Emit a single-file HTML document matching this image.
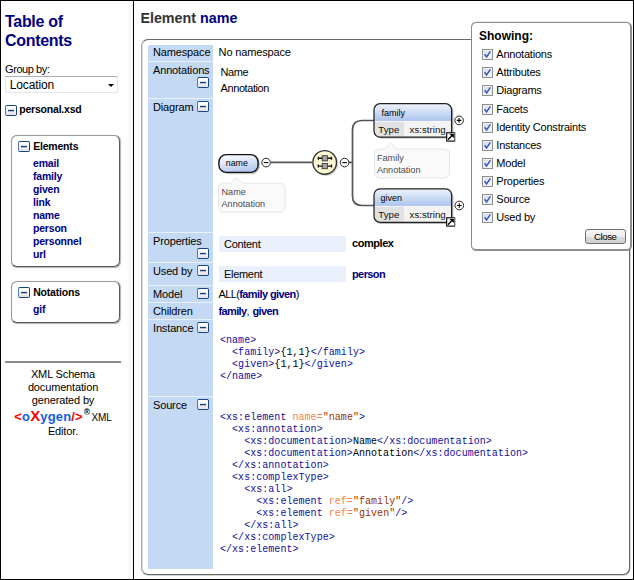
<!DOCTYPE html>
<html>
<head>
<meta charset="utf-8">
<title>Schema documentation for personal.xsd</title>
<style>
html,body{margin:0;padding:0;}
body{width:634px;height:580px;position:relative;overflow:hidden;background:#fff;font-family:"Liberation Sans",sans-serif;font-size:12px;color:#000;}
.abs{position:absolute;}
#frame{left:0;top:0;width:632px;height:578px;border:1px solid #000;z-index:50;pointer-events:none;}
#sep{left:133px;top:0;width:1px;height:580px;background:#000;}
#sepshade{left:127px;top:2px;width:6px;height:577px;background:linear-gradient(to right,#fff 0%,#f8f8f8 30%,#f7f7f7 100%);}
a,.lnk{color:#000080;font-weight:bold;text-decoration:none;}
/* left */
#toc{left:5px;top:12px;font-size:16px;line-height:19px;font-weight:bold;color:#000080;letter-spacing:-0.3px;}
#groupby{left:5px;top:62px;font-size:11px;line-height:14px;color:#000;letter-spacing:-0.42px;}
#sel{left:5px;top:76px;width:111px;height:15px;border:1px solid #e2e5ee;border-top-color:#abadb3;background:#fff;font-size:12px;line-height:17px;}
#sel span{position:absolute;left:3.7px;top:0;letter-spacing:-0.12px;}
#sel i{position:absolute;right:3.5px;top:7px;width:0;height:0;border-left:3px solid transparent;border-right:3px solid transparent;border-top:3px solid #000;}
.ico{display:inline-block;width:9.6px;height:9px;border:1px solid #17457f;border-left-color:#4d78b0;border-bottom-width:1.3px;border-radius:2px;background:linear-gradient(#fff 15%,#e4e0ea);position:relative;vertical-align:top;}
.ico:after{content:"";position:absolute;left:2px;top:4px;width:6px;height:1px;background:#123c80;box-shadow:0 1px 0 rgba(18,60,128,0.28),0 -1px 0 rgba(18,60,128,0.12);}
#pers{left:5px;top:102px;font-weight:bold;font-size:10.5px;line-height:14px;color:#000;letter-spacing:-0.2px;}
#pers .ico{margin-right:2.6px;margin-top:3px;}
.lbox{border:1px solid #9a9a9a;border-right-color:#5a5a5a;border-bottom-color:#5a5a5a;border-radius:6px;background:#fff;box-shadow:0.6px 0.6px 0.8px rgba(0,0,0,0.3);}
#elbox{left:11px;top:135px;width:107px;height:130px;}
#nobox{left:11px;top:281px;width:107px;height:39.5px;}
.lbox .h{position:absolute;left:6px;top:3px;font-weight:bold;font-size:10.5px;line-height:14px;color:#000;letter-spacing:-0.2px;}
.lbox .h .ico{margin-right:3.6px;margin-top:2px;}
.lbox .l{position:absolute;left:21px;top:21.4px;font-size:10.5px;line-height:13px;letter-spacing:-0.2px;}
.lbox .l div{color:#000080;font-weight:bold;}
#hr{left:5px;top:361px;width:116px;height:2px;background:#8a8a8a;}
#foot{left:5px;top:367.6px;width:116px;height:80px;font-size:11px;line-height:13px;color:#000;letter-spacing:-0.15px;}
#foot div{position:absolute;left:0;width:116px;text-align:center;white-space:nowrap;}
#foot sup{font-size:8.5px;font-weight:bold;line-height:0;position:relative;top:-1px;left:1px;vertical-align:super;}
#foot .ox{font-weight:bold;font-size:13px;line-height:10px;color:#f00;letter-spacing:0.15px;}
#foot .ox b{color:#1560e0;}
#foot .ox i{font-style:normal;font-size:15px;line-height:10px;}
#foot .xm{font-size:10px;}
/* main */
#title{left:140.4px;top:8.5px;font-size:14.3px;line-height:18px;font-weight:bold;color:#333;}
#title span{color:#000080;}
#mbox{left:141px;top:39px;width:487px;height:534px;border:1px solid #a8a8a8;border-top-color:#6a6a6a;border-right:1px solid #666;border-bottom:1px solid #666;border-radius:7px;background:#fff;box-shadow:0.5px 0.5px 0 rgba(90,90,90,0.5),inset 1px 0 0 #dcdcdc;}
.lab{left:148px;width:65px;background:#c4d9f3;font-size:11px;line-height:14px;color:#000;letter-spacing:-0.15px;}
.lab span{position:absolute;left:5px;top:1px;}
.lab .ico{position:absolute;}
.val{left:219px;font-size:11px;line-height:14px;color:#000;letter-spacing:-0.15px;}
.val.lnk,.val .lnk{letter-spacing:-0.6px;color:#000080;font-weight:bold;}
.val b{letter-spacing:-0.45px;}
.prop{left:219px;width:127px;height:16px;background:#e9f0fb;font-size:11px;line-height:16px;letter-spacing:-0.15px;}
.prop span{position:absolute;left:5px;letter-spacing:-0.3px;}
pre{margin:0;font-family:"Liberation Mono",monospace;font-size:10px;line-height:12px;color:#10109c;letter-spacing:0.04px;}
pre .a{color:#f5844c;}
pre .v{color:#993300;}
pre .t{color:#000;}
/* showing */
#show{left:471px;top:22px;width:158px;height:226px;border:1px solid #8a8a8a;border-right:2px solid #8e8e8e;border-bottom:2px solid #8e8e8e;border-radius:5.5px;background:#fff;z-index:10;box-shadow:0 -0.6px 0 rgba(120,120,120,0.35);}
#show .hd{position:absolute;left:7px;top:6px;font-weight:bold;font-size:12px;line-height:15px;}
.cb{position:absolute;left:9.8px;font-size:11px;line-height:14px;white-space:nowrap;letter-spacing:-0.22px;}
.cb i{display:inline-block;width:9px;height:9px;border:1px solid #8e8f8f;background:linear-gradient(135deg,#cfd5df,#f4f5f8 70%);box-shadow:inset 0 0 0 1px #f0f1f4;vertical-align:top;margin-top:2px;margin-right:3.5px;position:relative;}
.cb i svg{position:absolute;left:0;top:0;}
#close{position:absolute;left:113px;top:206px;width:38.5px;height:12.5px;border:1px solid #707070;border-radius:3px;background:linear-gradient(#f6f6f6 0%,#ececec 50%,#dcdcdc 51%,#cfcfcf 100%);font-size:9.6px;line-height:13.6px;text-align:center;color:#000;letter-spacing:-0.45px;}
</style>
</head>
<body>
<div class="abs" id="sepshade"></div>
<div class="abs" id="sep"></div>

<!-- LEFT PANEL -->
<div class="abs" id="toc">Table of<br>Contents</div>
<div class="abs" id="groupby">Group by:</div>
<div class="abs" id="sel"><span>Location</span><i></i></div>
<div class="abs" id="pers"><span class="ico"></span>personal.xsd</div>

<div class="abs lbox" id="elbox">
  <div class="h"><span class="ico"></span>Elements</div>
  <div class="l"><div>email</div><div>family</div><div>given</div><div>link</div><div>name</div><div>person</div><div>personnel</div><div>url</div></div>
</div>
<div class="abs lbox" id="nobox">
  <div class="h"><span class="ico"></span>Notations</div>
  <div class="l"><div>gif</div></div>
</div>
<div class="abs" id="hr"></div>
<div class="abs" id="foot">
<div style="top:0px">XML Schema</div>
<div style="top:13px">documentation</div>
<div style="top:26px">generated by</div>
<div style="top:41px;line-height:16px;"><span class="ox">&lt;<b>o</b><i>X</i><b>ygen</b>/&gt;</span><sup>&reg;</sup><span class="xm"> XML</span></div>
<div style="top:57px">Editor.</div>
</div>

<!-- MAIN -->
<div class="abs" id="title">Element <span>name</span></div>
<div class="abs" id="mbox"></div>

<div class="abs" style="left:148px;top:45px;width:65px;height:524px;background:#e9f0fa;"></div>
<div class="abs lab" style="top:45px;height:16px;"><span style="top:0">Namespace</span></div>
<div class="abs lab" style="top:62px;height:36px;"><span>Annotations</span><i class="ico" style="left:49.4px;top:15px;"></i></div>
<div class="abs lab" style="top:99px;height:133px;"><span>Diagram</span><i class="ico" style="left:49.4px;top:2px;"></i></div>
<div class="abs lab" style="top:233px;height:29px;"><span>Properties</span><i class="ico" style="left:49.4px;top:15px;"></i></div>
<div class="abs lab" style="top:263px;height:22px;"><span>Used by</span><i class="ico" style="left:49.4px;top:2px;"></i></div>
<div class="abs lab" style="top:286px;height:16px;"><span>Model</span><i class="ico" style="left:49.4px;top:2px;"></i></div>
<div class="abs lab" style="top:303px;height:16px;"><span>Children</span></div>
<div class="abs lab" style="top:320px;height:76px;"><span>Instance</span><i class="ico" style="left:49.4px;top:2px;"></i></div>
<div class="abs lab" style="top:397px;height:172px;"><span>Source</span><i class="ico" style="left:49.4px;top:2px;"></i></div>

<div class="abs val" style="top:45px;left:218.6px;">No namespace</div>
<div class="abs val" style="top:64px;left:220.6px;line-height:16.4px;letter-spacing:-0.42px;">Name<br>Annotation</div>

<div class="abs prop" style="top:236px;"><span>Content</span></div>
<div class="abs val" style="top:236px;left:352px;"><b>complex</b></div>
<div class="abs prop" style="top:266px;"><span>Element</span></div>
<div class="abs val lnk" style="top:267px;left:352px;">person</div>
<div class="abs val" style="top:287px;left:218.4px;"><span style="letter-spacing:-0.6px">ALL(</span><span class="lnk">family given</span>)</div>
<div class="abs val" style="top:304px;left:218.4px;"><span class="lnk">family</span>, <span class="lnk">given</span></div>

<pre class="abs" style="left:220px;top:335px;">&lt;name&gt;
  &lt;family&gt;<span class="t">{1,1}</span>&lt;/family&gt;
  &lt;given&gt;<span class="t">{1,1}</span>&lt;/given&gt;
&lt;/name&gt;</pre>

<pre class="abs" style="left:220px;top:412px;">&lt;xs:element <span class="a">name=</span><span class="v">"name"</span>&gt;
  &lt;xs:annotation&gt;
    &lt;xs:documentation&gt;<span class="t">Name</span>&lt;/xs:documentation&gt;
    &lt;xs:documentation&gt;<span class="t">Annotation</span>&lt;/xs:documentation&gt;
  &lt;/xs:annotation&gt;
  &lt;xs:complexType&gt;
    &lt;xs:all&gt;
      &lt;xs:element <span class="a">ref=</span><span class="v">"family"</span>/&gt;
      &lt;xs:element <span class="a">ref=</span><span class="v">"given"</span>/&gt;
    &lt;/xs:all&gt;
  &lt;/xs:complexType&gt;
&lt;/xs:element&gt;</pre>

<!-- DIAGRAM -->
<svg class="abs" id="dia" style="left:214px;top:99px;" width="258" height="134" viewBox="214 99 258 134" font-family="Liberation Sans, sans-serif">
<defs>
<linearGradient id="gPill" x1="0" y1="0" x2="0.35" y2="1"><stop offset="0" stop-color="#ffffff"/><stop offset="0.35" stop-color="#eaf0fb"/><stop offset="1" stop-color="#b6caef"/></linearGradient>
<linearGradient id="gHead" x1="0" y1="0" x2="0" y2="1"><stop offset="0" stop-color="#f2f6fd"/><stop offset="1" stop-color="#a9c3ee"/></linearGradient>
<clipPath id="cf"><rect x="374" y="103.7" width="77.6" height="33.4" rx="6" ry="6"/></clipPath>
<clipPath id="cg"><rect x="374" y="188.9" width="77.6" height="33.4" rx="6" ry="6"/></clipPath>
</defs>
<!-- connector lines -->
<g fill="none" stroke="#555" stroke-width="1.7">
<path d="M271 162.4 H312"/>
<path d="M349 162.4 H352.5"/>
<path d="M374 120.5 H362 Q352.5 120.5 352.5 130 V196 Q352.5 205.5 362 205.5 H374"/>
</g>
<!-- name pill -->
<rect x="220" y="155.6" width="40" height="18.6" rx="8" ry="8" fill="#9a9a9a" opacity="0.55"/>
<rect x="218.9" y="154.6" width="39.2" height="17.8" rx="7.5" ry="7.5" fill="url(#gPill)" stroke="#111" stroke-width="1.4"/>
<text x="225.8" y="166.4" font-size="8.8" fill="#000">name</text>
<!-- minus 1 -->
<circle cx="266.1" cy="162.6" r="4.3" fill="#fff" stroke="#222" stroke-width="1"/>
<path d="M263.8 162.6 H268.4" stroke="#000" stroke-width="1.1"/>
<!-- name annotation bubble -->
<path d="M224 183.2 H230.2 L236.3 177.4 L242.4 183.2 H280 Q285.2 183.2 285.2 188.4 V207 Q285.2 212.2 280 212.2 H224 Q218.6 212.2 218.6 207 V188.4 Q218.6 183.2 224 183.2 Z" fill="#fafafa" stroke="#e6e6e6" stroke-width="1"/>
<text x="221.5" y="195.2" font-size="9.15" fill="#4a4a4a">Name</text>
<text x="221.5" y="207" font-size="9.15" fill="#4a4a4a">Annotation</text>
<!-- ALL compositor -->
<circle cx="325.8" cy="163.6" r="12.2" fill="#9a9a9a" opacity="0.5"/>
<circle cx="324.7" cy="162.4" r="11.8" fill="#fbf7d2" stroke="#333" stroke-width="1.4"/>
<g stroke="#111" stroke-width="1.4" fill="none">
<path d="M318.4 158.3 H331.4 M318.4 166.1 H331.4"/>
<path d="M318.3 156.8 V159.8 M331.5 156.8 V159.8 M318.3 164.6 V167.6 M331.5 164.6 V167.6" stroke-width="1.3"/>
</g>
<rect x="322.2" y="155.7" width="5.2" height="5.2" fill="#a6a6a6" stroke="#3a3a3a" stroke-width="0.9"/>
<rect x="322.2" y="163.5" width="5.2" height="5.2" fill="#a6a6a6" stroke="#3a3a3a" stroke-width="0.9"/>
<!-- minus 2 -->
<circle cx="344.6" cy="162.6" r="4.3" fill="#fff" stroke="#222" stroke-width="1"/>
<path d="M342.3 162.6 H346.9" stroke="#000" stroke-width="1.1"/>

<!-- family box -->
<rect x="375" y="104.8" width="78.4" height="33.6" rx="6.5" ry="6.5" fill="#8a8a8a" opacity="0.6"/>
<g clip-path="url(#cf)">
<rect x="373" y="103" width="80" height="18.4" fill="url(#gHead)"/>
<rect x="373" y="121.4" width="31" height="17" fill="#e2e2e2"/>
<rect x="404" y="121.4" width="50" height="17" fill="#f3f3f3"/>
<path d="M373 121.4 H453" stroke="#fff" stroke-width="0.8"/>
</g>
<rect x="374" y="103.7" width="77.6" height="33.4" rx="6" ry="6" fill="none" stroke="#222" stroke-width="1.25"/>
<text x="381.4" y="115.7" font-size="9" fill="#000">family</text>
<text x="378.3" y="132.8" font-size="9.7" fill="#111">Type</text>
<text x="409.6" y="132.8" font-size="9.7" fill="#111">xs:string</text>
<!-- plus -->
<circle cx="459.1" cy="120.4" r="4.3" fill="#fff" stroke="#222" stroke-width="1"/>
<path d="M456.8 120.4 H461.4 M459.1 118.1 V122.7" stroke="#000" stroke-width="1.1"/>
<!-- link arrow -->
<rect x="446.7" y="132.8" width="7.9" height="8.3" fill="#fff" stroke="#000" stroke-width="1.1"/>
<path d="M454.7 132.4 V141.6" stroke="#808080" stroke-width="1.1"/>
<path d="M448.4 139.3 L452.2 135.3" stroke="#000" stroke-width="1.3" stroke-linecap="round" fill="none"/>
<path d="M449.4 134.1 H453.9 V137.9 Z" fill="#000"/>
<!-- family annotation bubble -->
<path d="M380 149 H385.2 L390.7 143 L396.2 149 H444 Q449.4 149 449.4 154.4 V172.6 Q449.4 178 444 178 H380 Q374.6 178 374.6 172.6 V154.4 Q374.6 149 380 149 Z" fill="#fafafa" stroke="#e6e6e6" stroke-width="1"/>
<text x="376.9" y="160.8" font-size="9.15" fill="#4a4a4a">Family</text>
<text x="376.9" y="172.8" font-size="9.15" fill="#4a4a4a">Annotation</text>

<!-- given box -->
<rect x="375" y="190" width="78.4" height="34" rx="6.5" ry="6.5" fill="#8a8a8a" opacity="0.6"/>
<g clip-path="url(#cg)">
<rect x="373" y="188" width="80" height="18.4" fill="url(#gHead)"/>
<rect x="373" y="206.4" width="31" height="17" fill="#e2e2e2"/>
<rect x="404" y="206.4" width="50" height="17" fill="#f3f3f3"/>
<path d="M373 206.4 H453" stroke="#fff" stroke-width="0.8"/>
</g>
<rect x="374" y="188.9" width="77.6" height="33.4" rx="6" ry="6" fill="none" stroke="#222" stroke-width="1.25"/>
<text x="380.6" y="201" font-size="9" fill="#000">given</text>
<text x="378.3" y="217.8" font-size="9.7" fill="#111">Type</text>
<text x="409.6" y="217.8" font-size="9.7" fill="#111">xs:string</text>
<circle cx="459.3" cy="205.5" r="4.3" fill="#fff" stroke="#222" stroke-width="1"/>
<path d="M457 205.5 H461.6 M459.3 203.2 V207.8" stroke="#000" stroke-width="1.1"/>
<rect x="446.7" y="217.8" width="7.9" height="8.3" fill="#fff" stroke="#000" stroke-width="1.1"/>
<path d="M454.7 217.4 V226.6" stroke="#808080" stroke-width="1.1"/>
<path d="M448.4 224.3 L452.2 220.3" stroke="#000" stroke-width="1.3" stroke-linecap="round" fill="none"/>
<path d="M449.4 219.1 H453.9 V222.9 Z" fill="#000"/>
</svg>

<!-- SHOWING PANEL -->
<div class="abs" id="show">
  <div class="hd">Showing:</div>
  <div class="cb" style="top:24px"><i><svg width="9" height="9" viewBox="0 0 9 9"><path d="M1.6 4.2 L3.6 7 L7.4 1.4" fill="none" stroke="#3556c8" stroke-width="1.5"/></svg></i>Annotations</div>
  <div class="cb" style="top:42px"><i><svg width="9" height="9" viewBox="0 0 9 9"><path d="M1.6 4.2 L3.6 7 L7.4 1.4" fill="none" stroke="#3556c8" stroke-width="1.5"/></svg></i>Attributes</div>
  <div class="cb" style="top:60px"><i><svg width="9" height="9" viewBox="0 0 9 9"><path d="M1.6 4.2 L3.6 7 L7.4 1.4" fill="none" stroke="#3556c8" stroke-width="1.5"/></svg></i>Diagrams</div>
  <div class="cb" style="top:79px"><i><svg width="9" height="9" viewBox="0 0 9 9"><path d="M1.6 4.2 L3.6 7 L7.4 1.4" fill="none" stroke="#3556c8" stroke-width="1.5"/></svg></i>Facets</div>
  <div class="cb" style="top:97px"><i><svg width="9" height="9" viewBox="0 0 9 9"><path d="M1.6 4.2 L3.6 7 L7.4 1.4" fill="none" stroke="#3556c8" stroke-width="1.5"/></svg></i>Identity Constraints</div>
  <div class="cb" style="top:115px"><i><svg width="9" height="9" viewBox="0 0 9 9"><path d="M1.6 4.2 L3.6 7 L7.4 1.4" fill="none" stroke="#3556c8" stroke-width="1.5"/></svg></i>Instances</div>
  <div class="cb" style="top:133px"><i><svg width="9" height="9" viewBox="0 0 9 9"><path d="M1.6 4.2 L3.6 7 L7.4 1.4" fill="none" stroke="#3556c8" stroke-width="1.5"/></svg></i>Model</div>
  <div class="cb" style="top:151px"><i><svg width="9" height="9" viewBox="0 0 9 9"><path d="M1.6 4.2 L3.6 7 L7.4 1.4" fill="none" stroke="#3556c8" stroke-width="1.5"/></svg></i>Properties</div>
  <div class="cb" style="top:169px"><i><svg width="9" height="9" viewBox="0 0 9 9"><path d="M1.6 4.2 L3.6 7 L7.4 1.4" fill="none" stroke="#3556c8" stroke-width="1.5"/></svg></i>Source</div>
  <div class="cb" style="top:187px"><i><svg width="9" height="9" viewBox="0 0 9 9"><path d="M1.6 4.2 L3.6 7 L7.4 1.4" fill="none" stroke="#3556c8" stroke-width="1.5"/></svg></i>Used by</div>
  <div id="close">Close</div>
</div>

<div class="abs" id="frame"></div>
</body>
</html>
